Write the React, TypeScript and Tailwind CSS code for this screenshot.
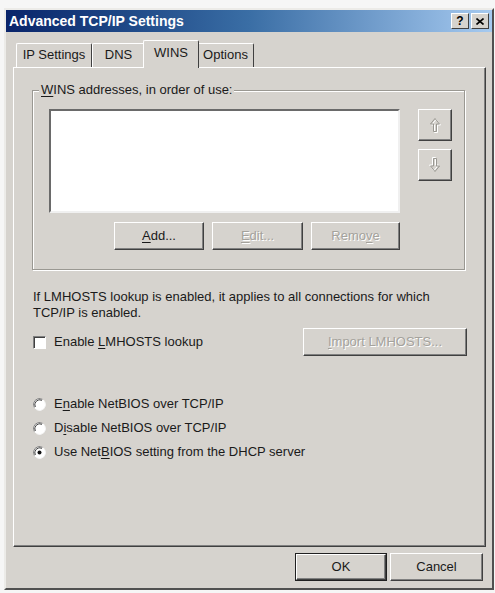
import type { ReactNode } from 'react'

const FONT = { fontFamily: '"Liberation Sans", Arial, sans-serif' }

function U({ children }: { children: ReactNode }) {
  return <span className="underline underline-offset-2">{children}</span>
}

function Btn({ children, w, disabled = false, isDefault = false }: { children: ReactNode; w: string; disabled?: boolean; isDefault?: boolean }) {
  return (
    <div className={`${w} h-[28px] ${isDefault ? 'border border-[#202020]' : ''}`}>
      <div className="w-full h-full border border-t-white border-l-white border-b-[#404040] border-r-[#404040] shadow-[inset_-1px_-1px_0_#808080] bg-[#d6d3ce] flex items-center justify-center text-[13px]">
        <span className={disabled ? 'text-[#a4a29c] [text-shadow:1px_1px_0_#fff]' : 'text-[#1a1a1a]'}>{children}</span>
      </div>
    </div>
  )
}

function ArrowBtn({ down = false }: { down?: boolean }) {
  return (
    <div className="w-[34px] h-[32px] border border-t-white border-l-white border-b-[#404040] border-r-[#404040] shadow-[inset_-1px_-1px_0_#808080] flex items-center justify-center">
      <svg width="12" height="16" viewBox="0 0 12 16" className={down ? 'rotate-180' : ''}>
        <path d="M6 1.5 L10.5 7 H7.5 V14.5 H4.5 V7 H1.5 Z" fill="none" stroke="#fff" strokeWidth="1" transform="translate(1 1)" />
        <path d="M6 1.5 L10.5 7 H7.5 V14.5 H4.5 V7 H1.5 Z" fill="none" stroke="#9a9892" strokeWidth="1" />
      </svg>
    </div>
  )
}

function Radio({ checked = false }: { checked?: boolean }) {
  return (
    <svg width="13" height="13" viewBox="0 0 13 13">
      <circle cx="6.5" cy="6.5" r="6" fill="#fff" />
      <path d="M1.3 9.5 A6 6 0 0 1 9.5 1.3" fill="none" stroke="#808080" strokeWidth="1" />
      <path d="M2.3 9 A5 5 0 0 1 9 2.3" fill="none" stroke="#404040" strokeWidth="1" />
      <path d="M11.7 3.5 A6 6 0 0 1 3.5 11.7" fill="none" stroke="#f4f4f4" strokeWidth="1" />
      {checked && <circle cx="6.5" cy="6.5" r="2" fill="#111" />}
    </svg>
  )
}

function Tab({ label, w, selected = false }: { label: ReactNode; w: string; selected?: boolean }) {
  return (
    <div
      className={`${w} flex items-center justify-center text-[13px] text-[#1a1a1a] bg-[#d6d3ce] border-t border-l border-t-white border-l-white border-r border-r-[#404040] rounded-t-[2px] ${
        selected ? 'h-[28px] -mb-[1px] relative z-10 -mx-[2px] pb-[4px]' : 'h-[24px] pb-[1px]'
      }`}
    >
      {label}
    </div>
  )
}

export default function App() {
  return (
    <div className="w-[495px] h-[593px] bg-[#f6f6f6] pt-[8px] pl-[4px]" style={FONT}>
      <div className="w-[490px] h-[582px] bg-[#d6d3ce] border-2 border-t-[#ecebe8] border-l-[#ecebe8] border-b-[#505050] border-r-[#505050] flex flex-col">
        <div className="h-[22px] bg-gradient-to-r from-[#0a246a] via-[#3a6ea5] to-[#a6caf0] flex items-center pl-[3px] pr-[3px]">
          <span className="text-white font-bold text-[14px] flex-1">Advanced TCP/IP Settings</span>
          <div className="flex gap-[2px]">
            <div className="w-[18px] h-[16px] bg-[#d6d3ce] border border-t-white border-l-white border-b-[#404040] border-r-[#404040] flex items-center justify-center text-[12px] font-bold leading-none text-black">?</div>
            <div className="w-[18px] h-[16px] bg-[#d6d3ce] border border-t-white border-l-white border-b-[#404040] border-r-[#404040] flex items-center justify-center">
              <svg width="8" height="7" viewBox="0 0 8 7"><path d="M0.5 0.5 L7.5 6.5 M7.5 0.5 L0.5 6.5" stroke="#000" strokeWidth="1.6" /></svg>
            </div>
          </div>
        </div>

        <div className="flex-1 flex flex-col pl-[7px] pr-[6px] pt-[8px]">
          <div className="h-[27px] flex items-end pl-[3px]">
            <Tab label="IP Settings" w="w-[76px]" />
            <Tab label="DNS" w="w-[53px]" />
            <Tab label="WINS" w="w-[56px]" selected />
            <Tab label="Options" w="w-[57px]" />
          </div>

          <div className="h-[480px] border border-t-white border-l-white border-b-[#404040] border-r-[#404040] shadow-[inset_-1px_-1px_0_#808080] pl-[18px] pt-[22px] text-[13px] text-[#1a1a1a]">
            <div className="relative w-[433px] h-[180px] border border-[#9a9892] shadow-[1px_1px_0_#fff,inset_1px_1px_0_#fff] pl-[16px] pt-[18px]">
              <span className="absolute -top-[8px] left-[6px] px-[2px] bg-[#d6d3ce] leading-[14px]">
                <U>W</U>INS addresses, in order of use:
              </span>
              <div className="flex">
                <div className="w-[351px] h-[104px] bg-white border-2 border-t-[#6a6a6a] border-l-[#6a6a6a] border-b-[#f0f0f0] border-r-[#f0f0f0]" />
                <div className="ml-[18px] flex flex-col gap-[8px]">
                  <ArrowBtn />
                  <ArrowBtn down />
                </div>
              </div>
              <div className="w-[351px] flex justify-end gap-[8px] mt-[9px]">
                <Btn w="w-[90px]"><U>A</U>dd...</Btn>
                <Btn w="w-[91px]" disabled><U>E</U>dit...</Btn>
                <Btn w="w-[89px]" disabled>Remo<U>v</U>e</Btn>
              </div>
            </div>

            <p className="mt-[19px] ml-[1px] leading-[16px]">
              If LMHOSTS lookup is enabled, it applies to all connections for which
              <br />
              TCP/IP is enabled.
            </p>

            <div className="mt-[7px] flex items-center w-[435px]">
              <div className="ml-[1px] w-[13px] h-[13px] bg-white border border-t-[#808080] border-l-[#808080] border-b-white border-r-white shadow-[inset_1px_1px_0_#404040]" />
              <span className="ml-[8px] flex-1">Enable <U>L</U>MHOSTS lookup</span>
              <Btn w="w-[164px]" disabled><U>I</U>mport LMHOSTS...</Btn>
            </div>

            <div className="mt-[40px] ml-[1px] flex flex-col gap-[8px]">
              <div className="h-[16px] flex items-center gap-[8px]"><Radio /><span>E<U>n</U>able NetBIOS over TCP/IP</span></div>
              <div className="h-[16px] flex items-center gap-[8px]"><Radio /><span>D<U>i</U>sable NetBIOS over TCP/IP</span></div>
              <div className="h-[16px] flex items-center gap-[8px]"><Radio checked /><span>Use Net<U>B</U>IOS setting from the DHCP server</span></div>
            </div>
          </div>

          <div className="mt-[6px] flex justify-end gap-[3px] pr-[3px]">
            <Btn w="w-[92px]" isDefault>OK</Btn>
            <Btn w="w-[93px]">Cancel</Btn>
          </div>
        </div>
      </div>
    </div>
  )
}
